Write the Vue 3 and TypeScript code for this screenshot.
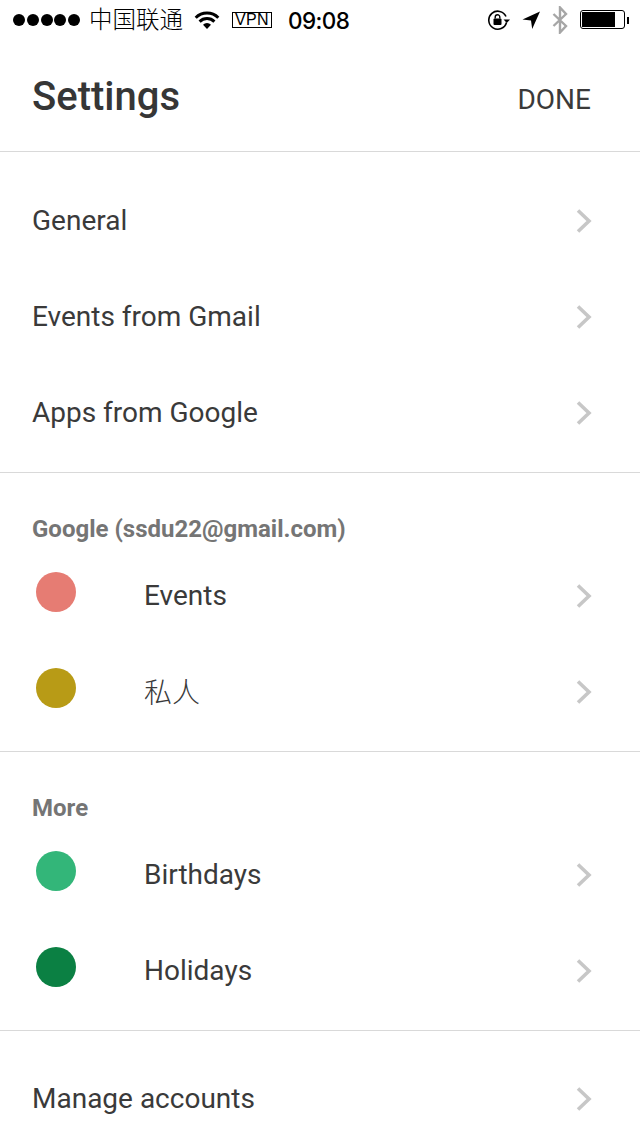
<script setup lang="ts">
interface Row { label: string; color?: string; cjk?: boolean }
interface Section { title?: string; rows: Row[]; cls: string }
const sections: Section[] = [
  { cls: 'plain first', rows: [{ label: 'General' }, { label: 'Events from Gmail' }, { label: 'Apps from Google' }] },
  { cls: 'titled', title: 'Google (ssdu22@gmail.com)', rows: [{ label: 'Events', color: '#e67c73' }, { label: '私人', color: '#b89b16', cjk: true }] },
  { cls: 'titled', title: 'More', rows: [{ label: 'Birthdays', color: '#33b679' }, { label: 'Holidays', color: '#0b8043' }] },
  { cls: 'plain', rows: [{ label: 'Manage accounts' }] }
]
</script>

<template>
  <div class="page">
    <div class="status">
      <div class="status-left">
        <div class="dots"><i v-for="n in 5" :key="n"></i></div>
        <span class="carrier">中国联通</span>
        <svg class="wifi" width="26" height="20" viewBox="0 0 26 20">
          <path d="M1.7 7.7A16 16 0 0 1 24.3 7.7" fill="none" stroke="#000" stroke-width="3"/>
          <path d="M5.6 11.6A10.5 10.5 0 0 1 20.4 11.6" fill="none" stroke="#000" stroke-width="3"/>
          <path d="M13 19L9 14.8A5.6 5.6 0 0 1 17 14.8Z" fill="#000"/>
        </svg>
        <span class="vpn">VPN</span>
        <span class="time">09:08</span>
      </div>
      <div class="status-right">
        <svg class="lock" width="24" height="22" viewBox="0 0 24 22">
          <path d="M19.5 13.5A9 9 0 1 1 19 7.5" fill="none" stroke="#000" stroke-width="1.6"/>
          <path d="M16.5 10.5h6.5l-3.2 3.6Z" fill="#000"/>
          <rect x="6.5" y="9.5" width="8" height="6.5" rx="1" fill="#000"/>
          <path d="M8.2 9.5V8a2.3 2.3 0 0 1 4.6 0v1.5" fill="none" stroke="#000" stroke-width="1.4"/>
        </svg>
        <svg class="arrow" width="20" height="20" viewBox="0 0 20 20">
          <path d="M19 1.5L1.5 9.5l8.5 1 1.2 8.5Z" fill="#000"/>
        </svg>
        <svg class="bt" width="16" height="28" viewBox="0 0 16 28">
          <path d="M1.5 8L14 20L8 26.5V1.5L14 8L1.5 20" fill="none" stroke="#a6a6a6" stroke-width="2.4"/>
        </svg>
        <div class="battery"><div class="level"></div></div>
        <div class="nub"></div>
      </div>
    </div>

    <header class="header">
      <h1 class="title">Settings</h1>
      <span class="done">DONE</span>
    </header>

    <section v-for="(s, i) in sections" :key="i" class="section" :class="s.cls">
      <div v-if="s.title" class="section-title">{{ s.title }}</div>
      <div v-for="r in s.rows" :key="r.label" class="row">
        <span v-if="r.color" class="swatch" :style="{ background: r.color }"></span>
        <span class="label" :class="{ indented: r.color, cjk: r.cjk }">{{ r.label }}</span>
        <svg class="chevron" width="18" height="26" viewBox="0 0 18 26">
          <path d="M3 2.5L14 13L3 23.5" fill="none" stroke="#c7c7c7" stroke-width="3.6"/>
        </svg>
      </div>
    </section>
  </div>
</template>

<style>
html, body { margin: 0; background: #fff; }
</style>

<style scoped>
.page {
  width: 640px;
  height: 1136px;
  overflow: hidden;
  background: #fff;
  font-family: Roboto, "Noto Sans CJK SC", sans-serif;
  color: #3a3a3a;
}
.status {
  height: 40px;
  display: flex;
  justify-content: space-between;
  align-items: center;
  color: #000;
  font-family: "Liberation Sans", "Noto Sans CJK SC", sans-serif;
}
.status-left { display: flex; align-items: center; padding-left: 13px; }
.dots { display: flex; gap: 1.75px; width: 67px; }
.dots i { width: 12px; height: 12px; border-radius: 50%; background: #000; display: block; }
.carrier { margin-left: 9px; font-size: 23.5px; line-height: 28px; width: 95px; color: #000; font-weight: 300; }
.wifi { margin-left: 10px; }
.vpn {
  margin-left: 12px;
  width: 40px;
  height: 16px;
  box-sizing: border-box;
  border: 1px solid #000;
  font-size: 16px;
  line-height: 14px;
  letter-spacing: 0.3px;
  text-align: center;
}
.time { margin-left: 16px; font-size: 22.5px; font-weight: 500; font-family: Inter, sans-serif; letter-spacing: -0.6px; }
.status-right { display: flex; align-items: center; padding-right: 11px; }
.arrow { margin-left: 10px; }
.bt { margin-left: 11px; }
.battery {
  margin: 0 0 1px 12px;
  width: 45px;
  height: 19px;
  box-sizing: border-box;
  border: 1px solid #000;
  border-radius: 3px;
  padding: 1px;
}
.level { width: 33px; height: 100%; background: #000; }
.nub { width: 2px; height: 7px; background: #000; margin-left: 2px; }
.header {
  height: 111px;
  box-sizing: border-box;
  padding: 0 49px 0 32px;
  display: flex;
  justify-content: space-between;
  align-items: center;
}
.title { margin: 2px 0 0; font-size: 40px; font-weight: 500; line-height: 48px; color: #363636; }
.done { margin-top: 8px; font-size: 28px; line-height: 34px; color: #3a3a3a; }
.section { border-top: 1px solid #d9d9d9; }
.plain { padding: 20px 0 12px; }
.titled { padding-bottom: 11px; }
.section-title {
  height: 75px;
  box-sizing: border-box;
  padding: 40px 32px 0;
  font-size: 24px;
  line-height: 32px;
  font-weight: 700;
  color: #757575;
}
.row {
  height: 96px;
  display: flex;
  align-items: center;
  padding: 0 46px 0 32px;
}
.label { font-size: 28px; line-height: 34px; color: #3a3a3a; flex: 1; }
.label.indented { margin-left: 68px; }
.label.cjk { font-weight: 300; margin-top: 4px; }
.first .label { margin-top: 2px; }
.swatch {
  width: 40px;
  height: 40px;
  margin: -8px 0 0 4px;
  border-radius: 50%;
  flex: none;
}
.chevron { flex: none; margin-right: 1px; }
.first .chevron { margin-top: 2px; }
</style>
